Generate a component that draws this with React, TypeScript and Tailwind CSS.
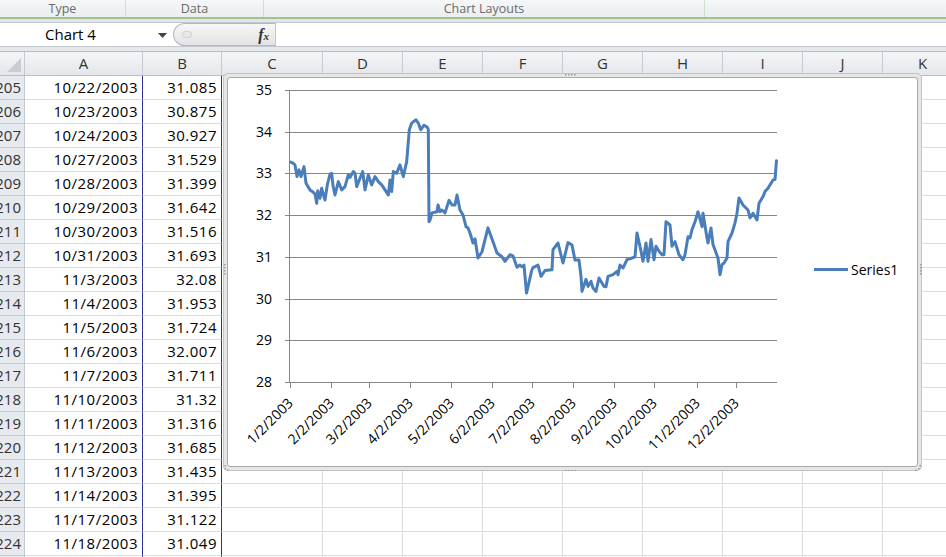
import React from "react";

type Col = { label: string; w: string };

const columns: Col[] = [
  { label: "A", w: "w-[118px]" },
  { label: "B", w: "w-[79px]" },
  { label: "C", w: "w-[101px]" },
  { label: "D", w: "w-[80px]" },
  { label: "E", w: "w-[80px]" },
  { label: "F", w: "w-[80px]" },
  { label: "G", w: "w-[80px]" },
  { label: "H", w: "w-[80px]" },
  { label: "I", w: "w-[80px]" },
  { label: "J", w: "w-[80px]" },
  { label: "K", w: "w-[80px]" },
];

const rows: [number, string, string][] = [
  [205, "10/22/2003", "31.085"],
  [206, "10/23/2003", "30.875"],
  [207, "10/24/2003", "30.927"],
  [208, "10/27/2003", "31.529"],
  [209, "10/28/2003", "31.399"],
  [210, "10/29/2003", "31.642"],
  [211, "10/30/2003", "31.516"],
  [212, "10/31/2003", "31.693"],
  [213, "11/3/2003", "32.08"],
  [214, "11/4/2003", "31.953"],
  [215, "11/5/2003", "31.724"],
  [216, "11/6/2003", "32.007"],
  [217, "11/7/2003", "31.711"],
  [218, "11/10/2003", "31.32"],
  [219, "11/11/2003", "31.316"],
  [220, "11/12/2003", "31.685"],
  [221, "11/13/2003", "31.435"],
  [222, "11/14/2003", "31.395"],
  [223, "11/17/2003", "31.122"],
  [224, "11/18/2003", "31.049"],
  [225, "11/19/2003", "31.010"],
];

// traced series: [x on page, value]
const series: [number, number][] = [
  [290.5, 33.27], [293, 33.24], [295, 33.2], [297, 32.92], [299, 33.08], [301, 32.92],
  [304, 33.16], [306, 32.76], [308, 32.68], [310, 32.6], [313, 32.55], [315, 32.5],
  [316.7, 32.28], [317.7, 32.58], [320, 32.4], [321.7, 32.64], [323, 32.52], [325, 32.36],
  [327.3, 32.72], [330, 32.98], [331.7, 33.0], [333, 32.7], [335, 32.48], [338.3, 32.8],
  [341.7, 32.6], [345, 32.68], [348.3, 32.96], [350, 32.9], [353.3, 33.04], [355, 33.0],
  [356.7, 32.68], [360, 32.88], [362.7, 33.04], [365, 32.6], [368.3, 32.96], [371.7, 32.72],
  [375, 32.92], [378.3, 32.8], [381.7, 32.72], [385, 32.6], [388.3, 32.48], [390, 32.84],
  [391.7, 32.56], [393.3, 33.04], [396.7, 33.0], [400, 33.2], [403.3, 32.92], [406.7, 33.28],
  [409.3, 34.04], [411.7, 34.2], [416, 34.28], [418.3, 34.2], [420.7, 34.04], [424, 34.15],
  [427.3, 34.1], [428.3, 34.05], [429, 31.84], [430, 31.88], [432, 32.05], [437, 32.08],
  [438, 32.24], [440, 32.08], [442, 32.12], [445, 32.05], [449, 32.35], [452, 32.24],
  [455, 32.24], [457, 32.48], [460, 32.12], [463, 32.0], [466, 31.72], [468, 31.69],
  [470, 31.57], [473, 31.33], [475, 31.43], [478, 30.97], [482, 31.12], [488, 31.69],
  [493, 31.36], [497, 31.09], [502, 31.0], [505, 30.89], [510, 31.05], [513, 31.02],
  [517, 30.75], [520, 30.8], [522, 30.76], [524, 30.8], [526.5, 30.13], [531.7, 30.67],
  [533, 30.74], [538, 30.8], [541, 30.53], [545, 30.67], [552, 30.69], [553, 31.17],
  [558, 31.33], [563, 30.85], [568, 31.34], [572, 31.28], [575, 30.92], [579, 30.92],
  [581, 30.53], [582, 30.17], [586, 30.46], [588, 30.29], [591, 30.41], [593, 30.25],
  [596, 30.17], [599, 30.49], [604, 30.29], [606, 30.28], [608, 30.53], [613, 30.57],
  [617, 30.65], [618, 30.57], [620, 30.8], [623, 30.73], [627, 30.93], [632, 30.97],
  [635, 31.0], [637, 31.57], [640, 31.25], [643, 30.89], [646, 31.33], [648, 30.89],
  [651, 31.41], [654, 30.93], [656, 31.25], [659, 31.13], [662, 31.05], [664, 31.05],
  [666, 31.84], [670, 31.76], [672, 31.25], [675, 31.36], [679, 31.05], [683, 30.93],
  [685, 31.05], [688, 31.48], [690, 31.45], [692, 31.65], [695, 31.84], [698, 32.08],
  [702, 31.72], [703, 32.04], [707, 31.45], [708, 31.33], [711, 31.69], [713, 31.29],
  [718, 30.97], [720, 30.57], [722, 30.81], [724, 30.85], [727, 30.97], [728, 31.36],
  [732, 31.57], [735, 31.81], [737, 32.04], [739, 32.41], [743, 32.24], [748, 32.12],
  [750, 31.93], [753, 32.04], [757, 31.88], [759, 32.28], [763, 32.44], [765, 32.56],
  [768, 32.64], [773, 32.84], [775, 32.85], [776.5, 33.3],
];

const ticks = [290, 331, 369, 410, 451, 492, 532, 573, 614, 654, 697, 736];
const months = ["1/2/2003", "2/2/2003", "3/2/2003", "4/2/2003", "5/2/2003", "6/2/2003", "7/2/2003", "8/2/2003", "9/2/2003", "10/2/2003", "11/2/2003", "12/2/2003"];

const yOf = (v: number) => 382 - (v - 28) * 41.75;

function Chart() {
  const pts = series.map(([x, v]) => `${x},${yOf(v).toFixed(1)}`).join(" ");
  const grid = [29, 30, 31, 32, 33, 34, 35];
  return (
    <div className="absolute left-[223px] top-[73px] h-[398px] w-[699px] rounded-[5px] border border-[#c4c4c4] bg-[#e6e6e6] p-[3px]">
      <div className="h-full w-full rounded-[3px] border border-[#a9a9a9] bg-white" />
      <svg
        className="absolute left-[-1px] top-[-1px] font-['Open_Sans',sans-serif] text-[14px]"
        width={699}
        height={398}
        viewBox="223 73 699 398"
      >
        {grid.map((v) => (
          <line key={v} x1={290} x2={777} y1={Math.round(yOf(v)) + 0.5} y2={Math.round(yOf(v)) + 0.5} stroke="#868686" strokeWidth={1} />
        ))}
        {[28, ...grid].map((v) => (
          <g key={v}>
            <line x1={285} x2={290} y1={Math.round(yOf(v)) + 0.5} y2={Math.round(yOf(v)) + 0.5} stroke="#868686" />
            <text x={272} y={Math.round(yOf(v)) + 5} textAnchor="end" fill="#000">
              {v}
            </text>
          </g>
        ))}
        <line x1={289.5} x2={289.5} y1={90} y2={383} stroke="#868686" />
        <line x1={289} x2={777} y1={382.5} y2={382.5} stroke="#868686" />
        {ticks.map((x, i) => (
          <g key={x}>
            <line x1={x + 0.5} x2={x + 0.5} y1={382} y2={388} stroke="#868686" />
            <text x={x + 4} y={404} textAnchor="end" fill="#000" transform={`rotate(-45 ${x + 4} 404)`}>
              {months[i]}
            </text>
          </g>
        ))}
        <polyline points={pts} fill="none" stroke="#4a7ebb" strokeWidth={3} strokeLinejoin="round" strokeLinecap="round" />
        <line x1={814} x2={848} y1={269.5} y2={269.5} stroke="#4a7ebb" strokeWidth={3} />
        <text x={851} y={275} fill="#000">
          Series1
        </text>
        {/* selection handles */}
        <g fill="#9a9a9a">
          {[0, 3, 6, 9].map((d) => (
            <rect key={"b" + d} x={565 + d} y={470} width={1.5} height={1.5} />
          ))}
          {[0, 3, 6, 9].map((d) => (
            <rect key={"t" + d} x={565 + d} y={74} width={1.5} height={1.5} />
          ))}
          {[0, 3, 6, 9].map((d) => (
            <rect key={"r" + d} x={920} y={264 + d} width={1.5} height={1.5} />
          ))}
          {[0, 3, 6, 9].map((d) => (
            <rect key={"l" + d} x={224} y={264 + d} width={1.5} height={1.5} />
          ))}
          <rect x={918} y={468} width={1.5} height={1.5} />
          <rect x={915} y={469.5} width={1.5} height={1.5} />
          <rect x={919.5} y={465} width={1.5} height={1.5} />
          <rect x={224.5} y={468} width={1.5} height={1.5} />
          <rect x={227} y={469.5} width={1.5} height={1.5} />
          <rect x={224.5} y={465} width={1.5} height={1.5} />
        </g>
      </svg>
    </div>
  );
}

export default function App() {
  return (
    <div className="relative h-[557px] w-[946px] overflow-hidden bg-white font-['Open_Sans',sans-serif] text-black">
      {/* ribbon group labels */}
      <div className="flex h-[17px] bg-gradient-to-b from-[#f5f7f8] to-[#eaeef0] text-[12.5px] leading-[17px] text-[#6a6a6a]">
        <div className="w-[126px] shrink-0 border-r border-[#cfe0c6] text-center">Type</div>
        <div className="w-[138px] shrink-0 border-r border-[#cfe0c6] text-center">Data</div>
        <div className="w-[441px] shrink-0 border-r border-[#cfe0c6] text-center">Chart Layouts</div>
        <div className="flex-1" />
      </div>
      <div className="h-[2px] bg-[#9dc58c]" />
      <div className="h-[3px] bg-[#e1e5ea]" />

      {/* formula bar */}
      <div className="flex h-[25px] border-y border-[#c3c8ce] bg-white">
        <div className="relative flex w-[173px] shrink-0 items-center pl-[45px] text-[15px]">
          Chart 4
          <svg className="absolute left-[158px] top-[10px]" width="9" height="5" viewBox="0 0 9 5">
            <path d="M0 0h9L4.5 5z" fill="#444" />
          </svg>
        </div>
        <div className="flex w-[102px] shrink-0 items-center justify-between rounded-l-full border border-r-0 border-[#b4b9bf] bg-gradient-to-b from-[#f7f7f7] to-[#e3e3e3] pl-[8px] pr-[6px]">
          <span className="h-[7px] w-[10px] rounded-full border border-[#cfcfcf] bg-[#e9e9e9]" />
          <span className="font-['Liberation_Serif',serif] text-[16px] font-bold italic leading-none text-[#333]">
            f<span className="text-[11px]">x</span>
          </span>
        </div>
        <div className="flex-1 border-l border-[#c3c8ce]" />
      </div>
      <div className="h-[4px] bg-[#e4e7eb]" />

      {/* column headers */}
      <div className="flex h-[25px] border-y border-[#b8bec5] bg-gradient-to-b from-[#f4f5f7] to-[#e4e7eb] text-[15px] text-[#333]">
        <div className="relative w-[25px] shrink-0 border-r border-[#c5cad1]">
          <svg className="absolute bottom-[3px] right-[3px]" width="14" height="14" viewBox="0 0 14 14">
            <path d="M14 0v14H0z" fill="#c9ccd0" />
          </svg>
        </div>
        {columns.map((c) => (
          <div key={c.label} className={`${c.w} flex shrink-0 items-center justify-center border-r border-[#c5cad1]`}>
            {c.label}
          </div>
        ))}
      </div>

      {/* rows */}
      {rows.map(([n, d, v]) => (
        <div key={n} className="flex h-[24px] text-[15px] tracking-[0.5px]">
          <div className="flex w-[25px] shrink-0 items-center justify-end overflow-hidden border-r border-b border-[#c5cad1] bg-[#e6e9ed] pr-[3px] tracking-normal text-[#333]">
            {n}
          </div>
          {columns.map((c) => {
            const edge = c.label === "A" || c.label === "B" ? "border-r-[#2d2d9c]" : "border-r-[#dadcdd]";
            const text = c.label === "A" ? d : c.label === "B" ? v : "";
            return (
              <div key={c.label} className={`${c.w} flex shrink-0 items-center justify-end border-r border-b border-b-[#dadcdd] ${edge} pr-[4px]`}>
                {text}
              </div>
            );
          })}
        </div>
      ))}

      <Chart />
    </div>
  );
}
